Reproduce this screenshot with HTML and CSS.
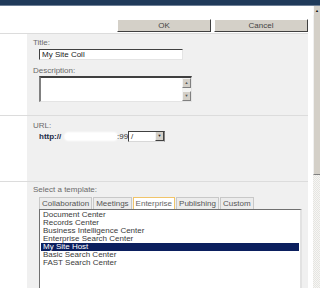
FILE: index.html
```html
<!DOCTYPE html>
<html lang="en">

<head>
    <meta charset="utf-8">
    <title>New Site Collection</title>
    <link rel="stylesheet" href="styles.css">
</head>

<body>

    <div class="topbar"></div>

    <div class="main">
        <div class="page">

            <div class="actions">
                <div class="knap">OK</div>
                <div class="knap">Cancel</div>
            </div>

            <!-- title / description -->
            <div class="section sec-title">
                <div class="side"></div>
                <div class="body">
                    <div class="label">Title:</div>
                    <div class="felt">My Site Coll</div>
                    <div class="label label-desc">Description:</div>
                    <div class="tekstfelt">
                        <div class="tf-scroll">
                            <div class="tf-btn">&#9650;</div>
                            <div class="tf-track"></div>
                            <div class="tf-btn">&#9660;</div>
                        </div>
                    </div>
                </div>
            </div>

            <!-- url -->
            <div class="section sec-url">
                <div class="side"></div>
                <div class="body">
                    <div class="label">URL:</div>
                    <div class="url-row">
                        <span class="http">http://</span>
                        <span class="skjult"></span>
                        <span class="port">:99</span>
                        <div class="vaelg">
                            <span class="vaelg-tekst">/</span>
                            <span class="vaelg-knap">&#9660;</span>
                        </div>
                    </div>
                </div>
            </div>

            <!-- template -->
            <div class="section sec-template">
                <div class="side"></div>
                <div class="body">
                    <div class="label">Select a template:</div>
                    <ul class="faner">
                        <li>Collaboration</li>
                        <li>Meetings</li>
                        <li class="aktiv">Enterprise</li>
                        <li>Publishing</li>
                        <li>Custom</li>
                    </ul>
                    <ul class="liste">
                        <li>Document Center</li>
                        <li>Records Center</li>
                        <li>Business Intelligence Center</li>
                        <li>Enterprise Search Center</li>
                        <li class="valgt">My Site Host</li>
                        <li>Basic Search Center</li>
                        <li>FAST Search Center</li>
                    </ul>
                </div>
            </div>

        </div>

        <div class="scrollbar">
            <div class="sb-op">&#9650;</div>
            <div class="sb-greb"></div>
            <div class="sb-spor"></div>
        </div>
    </div>

</body>

</html>
```

FILE: styles.css
```css
* {
    box-sizing: border-box;
}

body {
    margin: 0;
    width: 320px;
    height: 288px;
    overflow: hidden;
    background-color: white;
    font-family: "Liberation Sans", Arial, sans-serif;
    font-size: 8px;
    line-height: 10px;
    color: #333;
    display: flex;
    flex-direction: column;
}

.topbar {
    height: 6px;
    background-color: #1f3a5a;
    border-bottom: 1px solid #6d7f96;
}

.main {
    flex: 1;
    display: flex;
    min-height: 0;
}

.page {
    flex: 1;
}

/* buttons */

.actions {
    display: flex;
    justify-content: flex-end;
    gap: 3px;
    padding: 13px 5px 1px 0;
}

.knap {
    width: 94px;
    height: 13px;
    background-color: #d4d0c8;
    border-top: 1px solid #ffffff;
    border-left: 1px solid #ffffff;
    border-right: 1px solid #404040;
    border-bottom: 1px solid #404040;
    text-align: center;
    line-height: 11px;
    color: #444;
}

/* sections */

.section {
    display: flex;
    margin-right: 5px;
    border-top: 1px solid #dcdcdc;
}

.side {
    width: 27px;
    background-color: white;
}

.body {
    flex: 1;
    background-color: #f0f0f0;
    padding-left: 6px;
}

.sec-title {
    height: 82px;
}

.sec-url {
    height: 66px;
}

.sec-template {
    height: 120px;
}

.label {
    color: #6a6a6a;
}

.sec-title .label {
    margin-top: 4px;
}

.sec-title .label-desc {
    margin-top: 6px;
}

.felt {
    margin: 1px 0 0 6px;
    width: 144px;
    height: 11px;
    background-color: white;
    border-top: 1px solid #404040;
    border-left: 1px solid #404040;
    border-right: 1px solid #e4e4e4;
    border-bottom: 1px solid #e4e4e4;
    padding-left: 2px;
    line-height: 9px;
    color: #1a1a1a;
}

.tekstfelt {
    margin-left: 6px;
    width: 153px;
    height: 26px;
    background-color: white;
    border-top: 2px solid #404040;
    border-left: 2px solid #808080;
    border-right: 1px solid #e4e4e4;
    border-bottom: 1px solid #e4e4e4;
    display: flex;
    justify-content: flex-end;
}

.tf-scroll {
    width: 9px;
    display: flex;
    flex-direction: column;
}

.tf-btn {
    height: 10px;
    background-color: #d4d0c8;
    border-right: 1px solid #808080;
    border-bottom: 1px solid #808080;
    border-top: 1px solid #f4f4f4;
    border-left: 1px solid #f4f4f4;
    font-size: 4px;
    line-height: 8px;
    text-align: center;
    color: #555;
}

.tf-track {
    flex: 1;
    background-color: #f4f4f2;
}

/* url */

.sec-url .label {
    margin-top: 5px;
}

.url-row {
    display: flex;
    align-items: center;
    height: 11px;
    padding-left: 6px;
}

.http {
    font-weight: bold;
    color: #1c2c48;
    width: 26px;
}

.skjult {
    width: 52px;
    height: 7px;
    background-color: white;
    border-radius: 4px;
    box-shadow: 0 0 2px 1px white;
}

.port {
    width: 11px;
    color: #333;
}

.vaelg {
    display: flex;
    width: 37px;
    height: 11px;
    background-color: white;
    border-top: 1px solid #404040;
    border-left: 1px solid #404040;
    border-right: 1px solid #808080;
    border-bottom: 1px solid #d8d8d8;
}

.vaelg-tekst {
    flex: 1;
    padding-left: 2px;
    line-height: 9px;
}

.vaelg-knap {
    width: 9px;
    background-color: #d4d0c8;
    border-left: 1px solid #f4f4f4;
    border-right: 1px solid #404040;
    border-bottom: 1px solid #404040;
    font-size: 4px;
    line-height: 8px;
    text-align: center;
    color: #222;
}

/* template */

.sec-template .label {
    margin-top: 3px;
}

.faner {
    list-style: none;
    margin: 2px 0 0 6px;
    padding: 0;
    display: flex;
    gap: 1px;
}

.faner li {
    height: 12px;
    padding: 0 2px;
    border: 1px solid #c8c8c8;
    border-bottom: none;
    background-color: #ececec;
    color: #555;
    line-height: 11px;
}

.faner li.aktiv {
    background-color: white;
    border-color: #f0c46a;
    color: #666;
}

.liste {
    list-style: none;
    margin: 0 0 0 6px;
    padding: 1px;
    width: 263px;
    height: 90px;
    background-color: white;
    border-top: 1px solid #707070;
    border-left: 1px solid #707070;
    border-right: 2px solid #e2e2e2;
}

.liste li {
    height: 8px;
    line-height: 8px;
    padding-left: 2px;
    color: #3a3a3a;
}

.liste li.valgt {
    background-color: #0b1f5e;
    color: white;
}

/* page scrollbar */

.scrollbar {
    width: 7px;
    display: flex;
    flex-direction: column;
}

.sb-op {
    height: 9px;
    background-color: #d4d0c8;
    border-left: 1px solid #f8f8f8;
    font-size: 4px;
    line-height: 10px;
    text-align: center;
    color: #111;
}

.sb-greb {
    height: 160px;
    background-color: #d4d0c8;
    border-left: 1px solid #f0f0f0;
    border-bottom: 1px solid #808080;
}

.sb-spor {
    flex: 1;
    background-color: #f2f1ee;
    background-image: repeating-conic-gradient(#f6f6f4 0 25%, #e6e5e1 0 50%);
    background-size: 2px 2px;
}
```
